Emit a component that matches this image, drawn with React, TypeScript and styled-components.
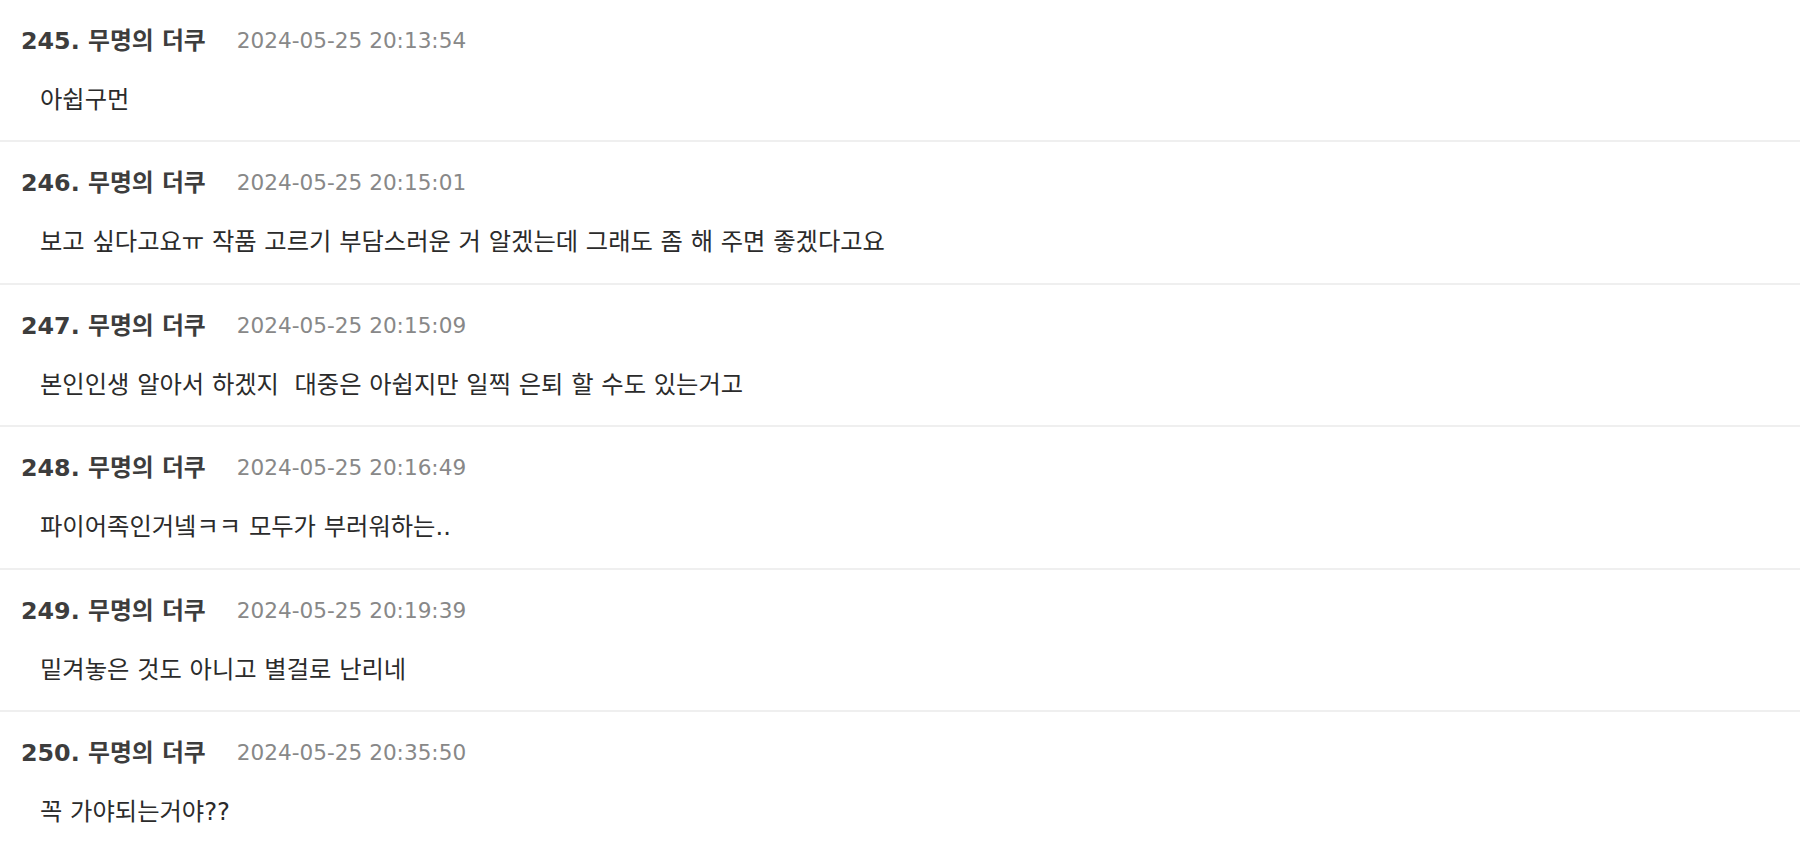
import React from "react";
import styled, { createGlobalStyle } from "styled-components";

const GlobalStyle = createGlobalStyle`
  html, body {
    margin: 0;
    padding: 0;
    background: #ffffff;
  }
  body {
    font-family: "DejaVu Sans", "Noto Sans CJK KR", "Noto Sans", sans-serif;
    -webkit-font-smoothing: antialiased;
  }
`;

type Comment = {
  no: number;
  author: string;
  date: string;
  text: string;
};

const comments: Comment[] = [
  { no: 245, author: "무명의 더쿠", date: "2024-05-25 20:13:54", text: "아쉽구먼" },
  {
    no: 246,
    author: "무명의 더쿠",
    date: "2024-05-25 20:15:01",
    text: "보고 싶다고요ㅠ 작품 고르기 부담스러운 거 알겠는데 그래도 좀 해 주면 좋겠다고요",
  },
  {
    no: 247,
    author: "무명의 더쿠",
    date: "2024-05-25 20:15:09",
    text: "본인인생 알아서 하겠지  대중은 아쉽지만 일찍 은퇴 할 수도 있는거고",
  },
  { no: 248, author: "무명의 더쿠", date: "2024-05-25 20:16:49", text: "파이어족인거넼ㅋㅋ 모두가 부러워하는.." },
  { no: 249, author: "무명의 더쿠", date: "2024-05-25 20:19:39", text: "밑겨놓은 것도 아니고 별걸로 난리네" },
  { no: 250, author: "무명의 더쿠", date: "2024-05-25 20:35:50", text: "꼭 가야되는거야??" },
];

const List = styled.ul`
  list-style: none;
  margin: 0;
  padding: 0;
  width: 100%;
`;

const Row = styled.li`
  display: flex;
  flex-direction: column;
  gap: 23px;
  padding: 23px 0 22.4px 21px;
  border-bottom: 2px solid #efefef;

  &:last-child {
    border-bottom: none;
  }
`;

const Header = styled.div`
  display: flex;
  align-items: center;
  height: 36px;
  line-height: 36px;
`;

const Author = styled.span`
  font-size: 23.8px;
  font-weight: 700;
  color: #3d3d3d;
`;

const DateText = styled.span`
  margin-left: 31px;
  font-size: 21.6px;
  font-weight: 400;
  color: #888888;
`;

const Body = styled.div`
  height: 36px;
  line-height: 36px;
  padding-left: 19px;
  font-size: 24.3px;
  color: #2b2b2b;
  white-space: pre;
`;

export default function App() {
  return (
    <>
      <GlobalStyle />
      <List>
        {comments.map((c) => (
          <Row key={c.no}>
            <Header>
              <Author>
                {c.no}. {c.author}
              </Author>
              <DateText>{c.date}</DateText>
            </Header>
            <Body>{c.text}</Body>
          </Row>
        ))}
      </List>
    </>
  );
}
